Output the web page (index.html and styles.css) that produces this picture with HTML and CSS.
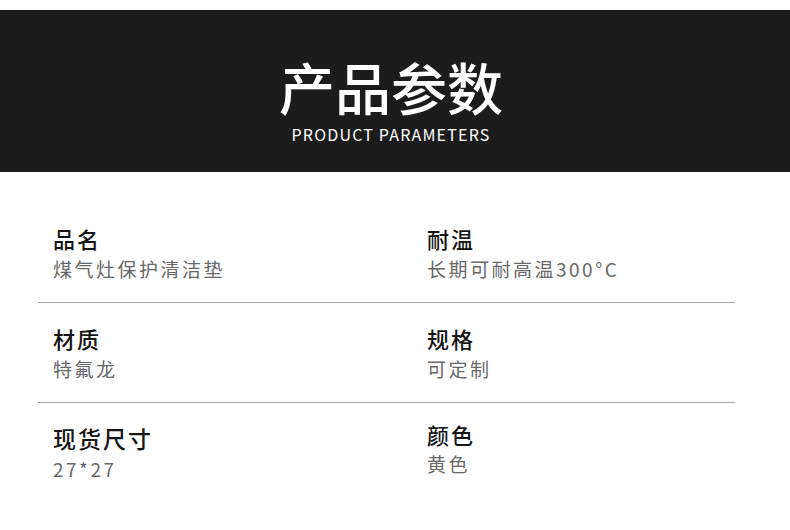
FILE: index.html
```html
<!DOCTYPE html>
<html lang="zh-CN">
<head>
<meta charset="utf-8">
<title>产品参数</title>
<link rel="stylesheet" href="styles.css">
</head>
<body>
<header class="banner">
  <h1 class="title">产品参数</h1>
  <p class="subtitle">PRODUCT PARAMETERS</p>
</header>
<section class="params">
  <div class="row">
    <div class="cell"><div class="label">品名</div><div class="value">煤气灶保护清洁垫</div></div>
    <div class="cell"><div class="label">耐温</div><div class="value">长期可耐高温300°C</div></div>
  </div>
  <div class="row">
    <div class="cell"><div class="label">材质</div><div class="value">特氟龙</div></div>
    <div class="cell"><div class="label">规格</div><div class="value">可定制</div></div>
  </div>
  <div class="row last">
    <div class="cell"><div class="label big">现货尺寸</div><div class="value">27*27</div></div>
    <div class="cell raised"><div class="label">颜色</div><div class="value tight">黄色</div></div>
  </div>
</section>
</body>
</html>
```
FILE: styles.css
```css
html, body {
  margin: 0;
  padding: 0;
  background: #ffffff;
  font-family: "Noto Sans CJK SC", "Noto Sans", sans-serif;
}
.banner {
  margin-top: 10px;
  height: 162px;
  background: #1c1c1c;
  color: #ffffff;
  display: flex;
  flex-direction: column;
  align-items: center;
  box-sizing: border-box;
  padding: 46px 8px 0 0;
}
.title {
  margin: 0;
  font-size: 56px;
  font-weight: 500;
  line-height: 60px;
  letter-spacing: 0;
}
.subtitle {
  margin: 8px 0 0;
  font-size: 16px;
  line-height: 20px;
  letter-spacing: 1.2px;
}
.params {
  width: 697px;
  margin-left: 38px;
  padding-top: 31px;
}
.row {
  display: grid;
  grid-template-columns: 374px 1fr;
  padding: 20px 0 20px 15px;
  border-bottom: 1px solid #a8a8a8;
}
.row.last {
  border-bottom: none;
}
.label {
  font-size: 22px;
  line-height: 30px;
  font-weight: 500;
  color: #151515;
  letter-spacing: 2px;
}
.label.big {
  font-size: 23px;
  letter-spacing: 2px;
}
.raised {
  margin-top: -4px;
}
.value {
  margin-top: 3px;
  font-size: 19px;
  line-height: 26px;
  color: #686868;
  letter-spacing: 2.5px;
}
.value.tight {
  margin-top: 2px;
}
```
